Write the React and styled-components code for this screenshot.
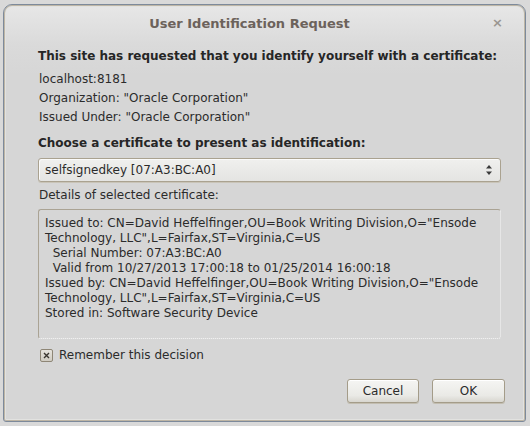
import React from "react";
import styled, { createGlobalStyle } from "styled-components";

const Global = createGlobalStyle`
  html, body { margin: 0; padding: 0; }
  body {
    background: #d9d9d9;
    width: 530px;
    height: 426px;
    overflow: hidden;
    font-family: "DejaVu Sans", "Liberation Sans", sans-serif;
  }
`;

const Screen = styled.div`
  width: 530px;
  height: 426px;
  box-sizing: border-box;
  padding: 4px 4px 4px 3px;
`;

const Window = styled.div`
  box-sizing: border-box;
  width: 523px;
  height: 418px;
  border: 1px solid #7d8a9b;
  border-radius: 9px 9px 3px 3px;
  box-shadow: inset 0 0 0 1px #bdb5a5, inset 0 0 0 2px #e2e2e0;
  background: linear-gradient(#e7e7e7 0px, #dadada 40px, #d6d6d6 70px);
  display: flex;
  flex-direction: column;
  overflow: hidden;
`;

const TitleBar = styled.div`
  position: relative;
  height: 34px;
  display: flex;
  align-items: center;
  justify-content: center;
  flex-shrink: 0;
`;

const Title = styled.div`
  font-weight: bold;
  font-size: 13px;
  color: #6c625b;
  margin-top: 2px;
  margin-right: 30px;
`;

const Close = styled.span`
  position: absolute;
  right: 22px;
  top: 10px;
  font-size: 13px;
  font-weight: bold;
  color: #9a9690;
`;

const Body = styled.div`
  flex: 1;
  display: flex;
  flex-direction: column;
  padding: 8px 24px 0 34px;
  color: #2b2b2b;
`;

const Heading = styled.div`
  font-weight: bold;
  font-size: 12px;
  line-height: 19px;
  margin-top: ${(p) => p.$top || 0}px;
  color: #262626;
`;

const Line = styled.div`
  font-size: 12px;
  line-height: 19px;
  margin-top: ${(p) => p.$top || 0}px;
  padding-left: 1px;
`;

const Select = styled.div`
  margin-top: 5px;
  height: 24px;
  box-sizing: border-box;
  border: 1px solid #aaa290;
  border-radius: 3px;
  background: linear-gradient(#f0f0ee, #e4e4e2);
  box-shadow: inset 1px 1px 0 #fafafa, 0 1px 0 #c9c4b8;
  display: flex;
  align-items: center;
  justify-content: space-between;
  padding: 0 8px 0 6px;
  font-size: 12px;
  color: #2b2b2b;
`;

const Arrows = styled.svg`
  display: block;
`;

const DetailsBox = styled.div`
  margin-top: 4px;
  height: 130px;
  box-sizing: border-box;
  border-top: 1px solid #aaa394;
  border-left: 1px solid #aaa394;
  border-right: 1px dotted #f6f6f6;
  border-bottom: 1px dotted #f6f6f6;
  border-radius: 3px;
  padding: 6px 6px 0 6px;
  font-size: 12px;
  line-height: 15px;
  color: #2b2b2b;
  white-space: pre;
`;

const CheckRow = styled.label`
  margin-top: 7px;
  display: flex;
  align-items: center;
  gap: 6px;
  font-size: 12px;
  line-height: 18px;
  padding-left: 2px;
  color: #2b2b2b;
`;

const Check = styled.span`
  width: 11px;
  height: 11px;
  border: 1px solid #8e8676;
  border-radius: 2px;
  background: linear-gradient(#e6e3dc, #d0ccc2);
  display: flex;
  align-items: center;
  justify-content: center;
`;

const Buttons = styled.div`
  margin-top: 15px;
  margin-right: -4px;
  display: flex;
  justify-content: flex-end;
  gap: 13px;
`;

const Button = styled.button`
  width: ${(p) => p.$w || 73}px;
  height: 24px;
  box-sizing: border-box;
  border: 1px solid #a49c89;
  border-radius: 3px;
  background: linear-gradient(#f5f5f3, #eaeae6 70%, #d8d6cf);
  box-shadow: inset 0 1px 0 #ffffff, 0 1px 0 #c2bdb0;
  font-family: "DejaVu Sans", "Liberation Sans", sans-serif;
  font-size: 12px;
  color: #2b2b2b;
  padding: 0;
`;

const details = `Issued to: CN=David Heffelfinger,OU=Book Writing Division,O="Ensode
Technology, LLC",L=Fairfax,ST=Virginia,C=US
  Serial Number: 07:A3:BC:A0
  Valid from 10/27/2013 17:00:18 to 01/25/2014 16:00:18
Issued by: CN=David Heffelfinger,OU=Book Writing Division,O="Ensode
Technology, LLC",L=Fairfax,ST=Virginia,C=US
Stored in: Software Security Device`;

export default function App() {
  return (
    <>
      <Global />
      <Screen>
        <Window>
          <TitleBar>
            <Title>User Identification Request</Title>
            <Close>×</Close>
          </TitleBar>
          <Body>
            <Heading>This site has requested that you identify yourself with a certificate:</Heading>
            <Line $top={4}>localhost:8181</Line>
            <Line>Organization: "Oracle Corporation"</Line>
            <Line>Issued Under: "Oracle Corporation"</Line>
            <Heading $top={7}>Choose a certificate to present as identification:</Heading>
            <Select>
              <span>selfsignedkey [07:A3:BC:A0]</span>
              <Arrows width="6" height="12" viewBox="0 0 6 12">
                <path d="M3 1 L6 4.5 L0 4.5 Z" fill="#3a3a3a" />
                <path d="M0 7.5 L6 7.5 L3 11 Z" fill="#3a3a3a" />
              </Arrows>
            </Select>
            <Line $top={4}>Details of selected certificate:</Line>
            <DetailsBox>{details}</DetailsBox>
            <CheckRow>
              <Check>
                <svg width="7" height="7" viewBox="0 0 7 7">
                  <path d="M1 1 L6 6 M6 1 L1 6" stroke="#3a3630" strokeWidth="1.4" />
                </svg>
              </Check>
              Remember this decision
            </CheckRow>
            <Buttons>
              <Button $w={72}>Cancel</Button>
              <Button>OK</Button>
            </Buttons>
          </Body>
        </Window>
      </Screen>
    </>
  );
}
